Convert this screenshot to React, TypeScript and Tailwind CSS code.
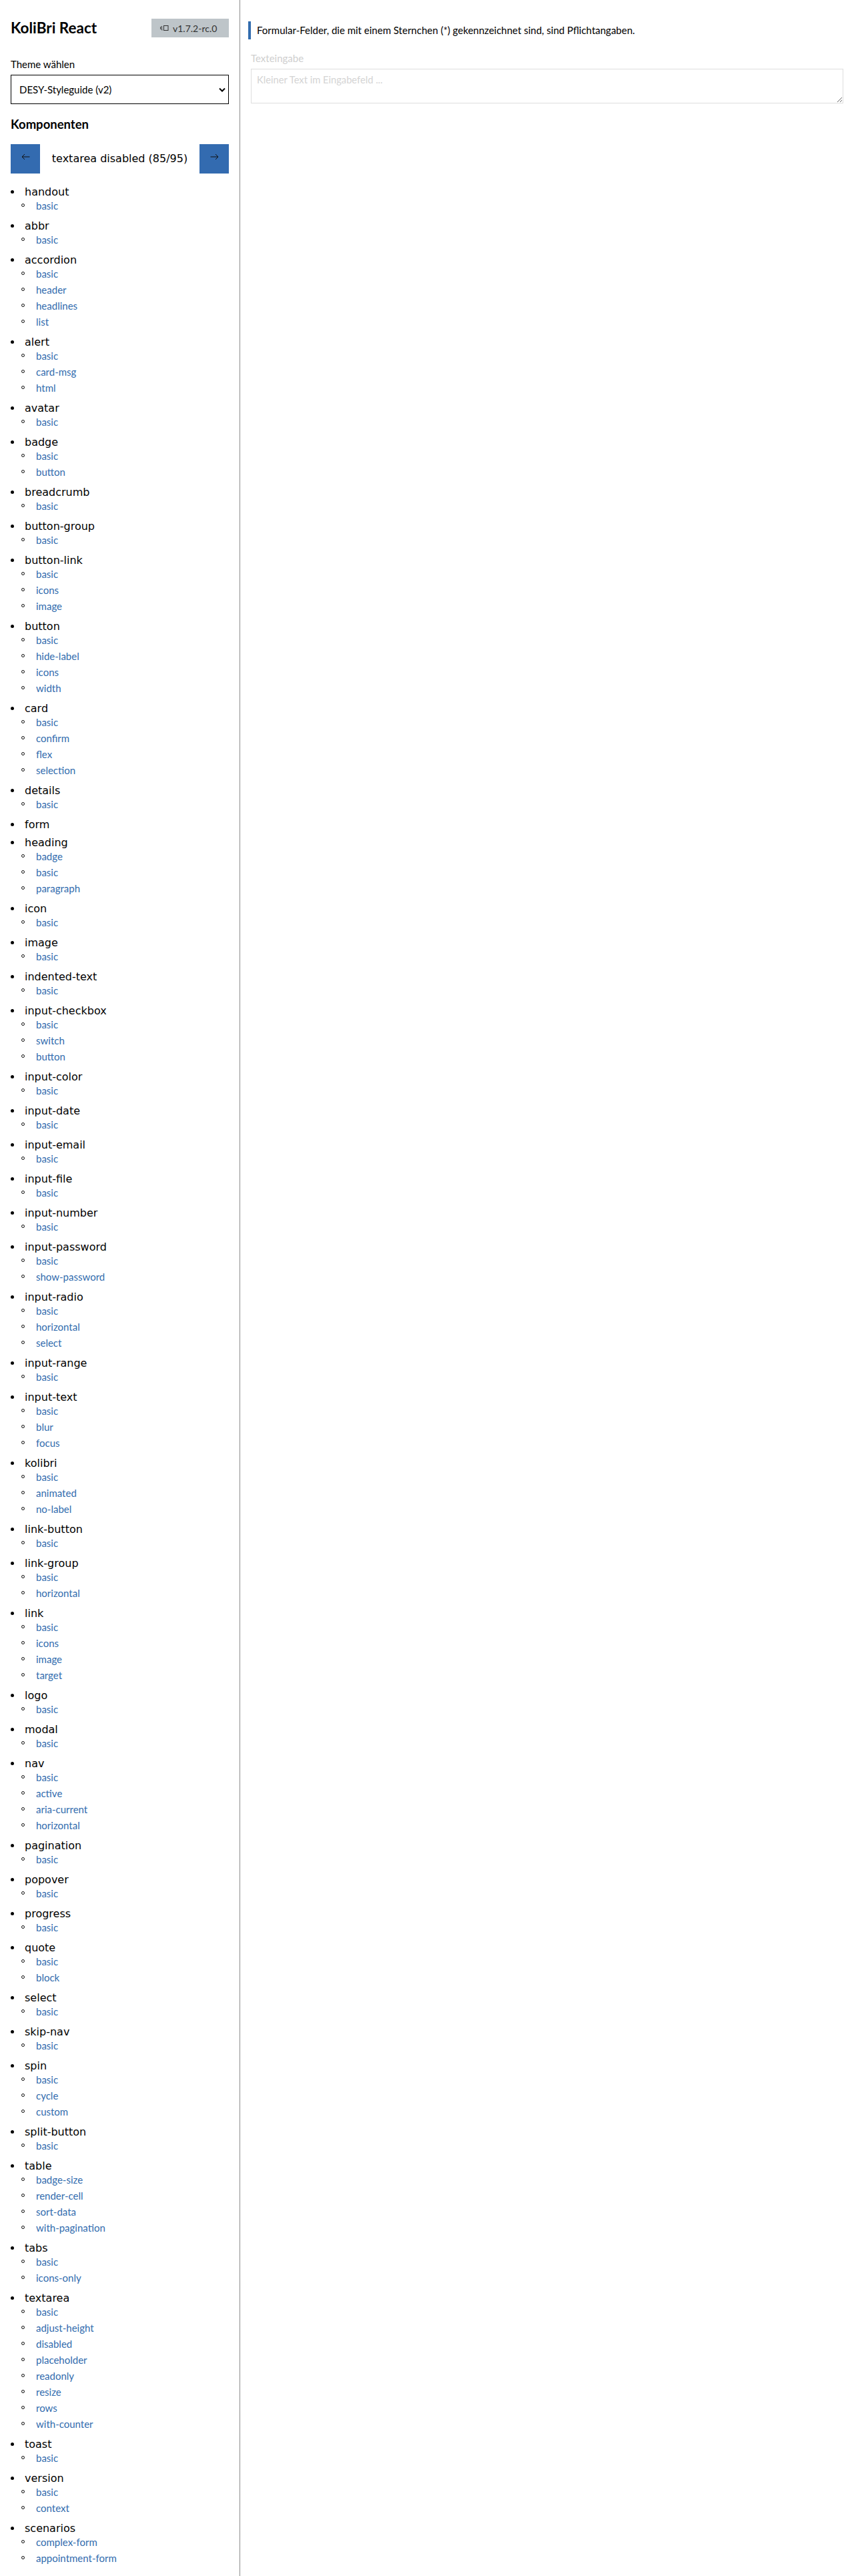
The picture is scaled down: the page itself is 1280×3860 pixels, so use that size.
const groups: [string, string[]][] = [
  ["handout", ["basic"]],
  ["abbr", ["basic"]],
  ["accordion", ["basic", "header", "headlines", "list"]],
  ["alert", ["basic", "card-msg", "html"]],
  ["avatar", ["basic"]],
  ["badge", ["basic", "button"]],
  ["breadcrumb", ["basic"]],
  ["button-group", ["basic"]],
  ["button-link", ["basic", "icons", "image"]],
  ["button", ["basic", "hide-label", "icons", "width"]],
  ["card", ["basic", "confirm", "flex", "selection"]],
  ["details", ["basic"]],
  ["form", []],
  ["heading", ["badge", "basic", "paragraph"]],
  ["icon", ["basic"]],
  ["image", ["basic"]],
  ["indented-text", ["basic"]],
  ["input-checkbox", ["basic", "switch", "button"]],
  ["input-color", ["basic"]],
  ["input-date", ["basic"]],
  ["input-email", ["basic"]],
  ["input-file", ["basic"]],
  ["input-number", ["basic"]],
  ["input-password", ["basic", "show-password"]],
  ["input-radio", ["basic", "horizontal", "select"]],
  ["input-range", ["basic"]],
  ["input-text", ["basic", "blur", "focus"]],
  ["kolibri", ["basic", "animated", "no-label"]],
  ["link-button", ["basic"]],
  ["link-group", ["basic", "horizontal"]],
  ["link", ["basic", "icons", "image", "target"]],
  ["logo", ["basic"]],
  ["modal", ["basic"]],
  ["nav", ["basic", "active", "aria-current", "horizontal"]],
  ["pagination", ["basic"]],
  ["popover", ["basic"]],
  ["progress", ["basic"]],
  ["quote", ["basic", "block"]],
  ["select", ["basic"]],
  ["skip-nav", ["basic"]],
  ["spin", ["basic", "cycle", "custom"]],
  ["split-button", ["basic"]],
  ["table", ["badge-size", "render-cell", "sort-data", "with-pagination"]],
  ["tabs", ["basic", "icons-only"]],
  ["textarea", ["basic", "adjust-height", "disabled", "placeholder", "readonly", "resize", "rows", "with-counter"]],
  ["toast", ["basic"]],
  ["version", ["basic", "context"]],
  ["scenarios", ["complex-form", "appointment-form"]],
];

function Arrow({ dir }: { dir: "left" | "right" }) {
  return (
    <svg width="13" height="10" viewBox="0 0 13 10" className="-mt-[7px]" fill="none" stroke="#111" strokeWidth="1">
      {dir === "left" ? <path d="M12.5 5H1M5 1L1 5l4 4" /> : <path d="M0.5 5H12M8 1l4 4-4 4" />}
    </svg>
  );
}

export default function App() {
  return (
    <div className="flex min-h-screen bg-white text-black">
      {/* sidebar */}
      <aside className="w-[360px] shrink-0 border-r border-[#8c8c8c] px-4 pt-7 pb-[14px]">
        <div className="flex items-center justify-between">
          <h1 className="font-['Lato',sans-serif] text-[22.5px] font-bold leading-7">KoliBri React</h1>
          <span className="flex h-7 w-[116px] items-center gap-1.5 bg-[#bec5c9] px-3 font-['Lato',sans-serif] text-[14px] text-[#333]">
            <svg width="14" height="10" viewBox="0 0 14 10" fill="none" stroke="#333" strokeWidth="1">
              <path d="M1.5 3v4M3.5 2v6h1" />
              <rect x="6.5" y="1.5" width="6.5" height="7" />
            </svg>
            v1.7.2-rc.0
          </span>
        </div>

        <label className="mt-7 block font-['Lato',sans-serif] text-[15px] leading-6">Theme wählen</label>
        <div className="relative mt-1">
          <select className="h-11 w-full appearance-none border border-black pl-3 font-['Lato',sans-serif] text-[15px]">
            <option>DESY-Styleguide (v2)</option>
          </select>
          <svg width="10" height="7" viewBox="0 0 10 7" className="pointer-events-none absolute right-[5px] top-[19px]" fill="none" stroke="#000" strokeWidth="2">
            <path d="M1 1.5l4 4 4-4" />
          </svg>
        </div>

        <h2 className="mt-[18px] font-['Lato',sans-serif] text-[18.5px] font-bold leading-6">Komponenten</h2>

        <div className="mt-[18px] flex items-center justify-between">
          <button className="flex h-11 w-11 items-center justify-center bg-[#336bb0]">
            <Arrow dir="left" />
          </button>
          <span className="font-['DejaVu_Sans',sans-serif] text-[16px]">textarea disabled (85/95)</span>
          <button className="flex h-11 w-11 items-center justify-center bg-[#336bb0]">
            <Arrow dir="right" />
          </button>
        </div>

        {/* component list */}
        <ul className="mt-[18px]">
          {groups.map(([name, subs]) => (
            <li key={name} className="mb-2 last:mb-0">
              <div className="flex h-[19px] items-center">
                <span className="h-[5px] w-[5px] rounded-full bg-black" />
                <span className="ml-4 font-['DejaVu_Sans',sans-serif] text-[16px] leading-[19px]">{name}</span>
              </div>
              {subs.length > 0 && (
                <ul>
                  {subs.map((s) => (
                    <li key={s} className="ml-4 flex h-6 items-center pb-[3px]">
                      <span className="h-[5px] w-[5px] rounded-full border border-black" />
                      <a href="#" className="ml-[17px] font-['Lato',sans-serif] text-[15px] leading-6 text-[#326cae]">
                        {s}
                      </a>
                    </li>
                  ))}
                </ul>
              )}
            </li>
          ))}
        </ul>
      </aside>

      {/* main */}
      <main className="flex-1 pl-3 pr-4 pt-8 font-['Lato',sans-serif]">
        <div className="flex h-[27px] items-center border-l-4 border-[#326cae] pl-[9px] text-[15px]">
          Formular-Felder, die mit einem Sternchen (*) gekennzeichnet sind, sind Pflichtangaben.
        </div>
        <div className="ml-1 mt-4">
          <label className="block text-[15px] leading-6 text-[#cfcfcf]">Texteingabe</label>
          <textarea
            disabled
            rows={2}
            placeholder="Kleiner Text im Eingabefeld ..."
            className="mt-1 block h-[52px] w-full border border-[#dedede] px-2 pt-1 text-[14.7px] placeholder:text-[#d4d4d4]"
          />
        </div>
      </main>
    </div>
  );
}
